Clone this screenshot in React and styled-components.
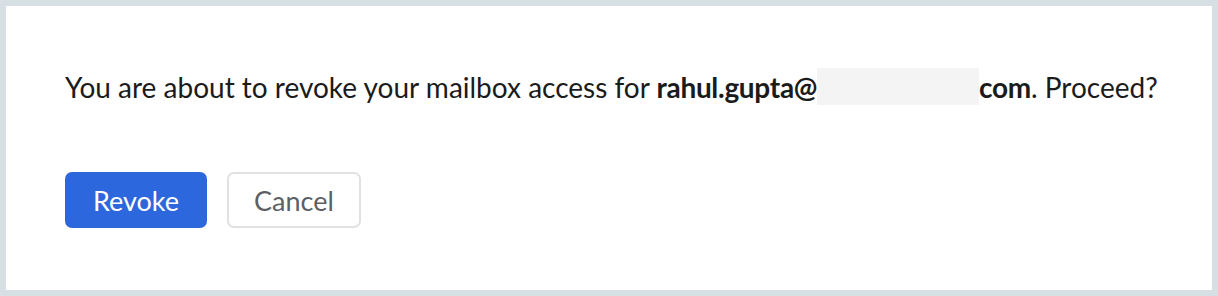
import React from 'react';
import styled, { createGlobalStyle } from 'styled-components';

const GlobalStyle = createGlobalStyle`
  html, body {
    margin: 0;
    padding: 0;
    background: #d6dfe4;
  }
  body {
    font-family: Lato, "Noto Sans", sans-serif;
  }
`;

const Frame = styled.div`
  padding: 6px;
  height: 296px;
  box-sizing: border-box;
`;

const Dialog = styled.section`
  background: #ffffff;
  height: 284px;
  box-sizing: border-box;
  padding: 61px 40px 0 59px;
`;

const Message = styled.p`
  margin: 0;
  font-size: 28px;
  line-height: 40px;
  color: #1b1b1b;
  white-space: nowrap;
`;

const Email = styled.strong`
  font-weight: 700;
  letter-spacing: -0.3px;
`;

// masked part of the address
const Redacted = styled.span`
  display: inline-block;
  width: 162px;
  height: 37px;
  background: #f4f4f5;
  vertical-align: -7px;
`;

const Actions = styled.div`
  display: flex;
  gap: 20px;
  margin-top: 65px;
`;

const Button = styled.button`
  height: 56px;
  padding: 0 ${(p) => (p.$primary ? 26 : 25)}px;
  border-radius: 7px;
  font-family: Lato, "Noto Sans", sans-serif;
  font-size: 27px;
  cursor: pointer;
  box-sizing: border-box;
  border: 2px solid ${(p) => (p.$primary ? '#2d67dd' : '#e1e1e1')};
  background: ${(p) => (p.$primary ? '#2d67dd' : '#ffffff')};
  color: ${(p) => (p.$primary ? '#ffffff' : '#5c5f66')};
`;

export default function App() {
  return (
    <>
      <GlobalStyle />
      <Frame>
        <Dialog>
          <Message>
            You are about to revoke your mailbox access for{' '}
            <Email>rahul.gupta@<Redacted />com</Email>. Proceed?
          </Message>
          <Actions>
            <Button $primary>Revoke</Button>
            <Button>Cancel</Button>
          </Actions>
        </Dialog>
      </Frame>
    </>
  );
}
